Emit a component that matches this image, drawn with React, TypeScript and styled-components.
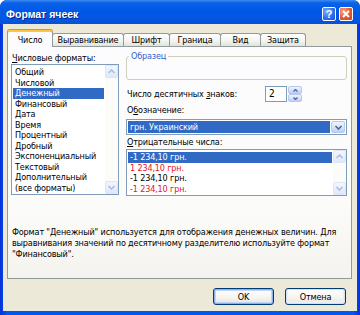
import React from 'react'
import styled, { createGlobalStyle } from 'styled-components'

const GlobalStyle = createGlobalStyle`
  html, body {
    margin: 0;
    padding: 0;
    background: #ffffff;
  }
  body {
    font-family: Tahoma, "DejaVu Sans Condensed", "DejaVu Sans", sans-serif;
    font-stretch: condensed;
    font-size: 9px;
    letter-spacing: -0.15px;
    color: #000000;
  }
`

const Window = styled.div`
  width: 360px;
  height: 315px;
  box-sizing: border-box;
  display: flex;
  flex-direction: column;
  background: linear-gradient(90deg, #0831d9 0%, #0058ee 2%, #0058ee 98%, #0831d9 100%);
  border-radius: 7px 7px 0 0;
  overflow: hidden;
`

const TitleBar = styled.div`
  height: 24px;
  box-sizing: border-box;
  padding: 3px 7px 0 6px;
  display: flex;
  align-items: center;
  background: linear-gradient(
    #3d8bf5 0%,
    #0a62e8 12%,
    #0058e6 45%,
    #0356e2 80%,
    #0650d8 100%
  );
`

const Title = styled.div`
  flex: 1;
  color: #ffffff;
  font-family: "Liberation Sans", Arial, sans-serif;
  font-stretch: normal;
  letter-spacing: 0;
  font-weight: bold;
  font-size: 10.5px;
  text-shadow: 1px 1px 0 #0a1e8c;
`

const TitleButtons = styled.div`
  display: flex;
  gap: 3px;
`

const TitleButton = styled.div<{ $close?: boolean }>`
  width: 14px;
  height: 14px;
  box-sizing: border-box;
  border: 1px solid #ffffff;
  border-radius: 2px;
  display: flex;
  align-items: center;
  justify-content: center;
  color: #ffffff;
  font-family: "Liberation Sans", Arial, sans-serif;
  font-weight: bold;
  font-size: 11px;
  background: ${p =>
    p.$close
      ? 'radial-gradient(circle at 30% 30%, #f2a78e 0%, #e35a2f 55%, #c8441d 100%)'
      : 'radial-gradient(circle at 30% 30%, #7fb0ff 0%, #2f6ff0 55%, #1d52d8 100%)'};
`

const Body = styled.div`
  flex: 1;
  margin: 0 3px 4px;
  background: #ece9d8;
  display: flex;
  flex-direction: column;
  padding: 6px 5px 0 4px;
`

const TabRow = styled.div`
  display: flex;
  align-items: flex-end;
  height: 16px;
`

const Tab = styled.div<{ $w: number; $active?: boolean }>`
  width: ${p => p.$w}px;
  height: ${p => (p.$active ? 17 : 13)}px;
  box-sizing: border-box;
  border: 1px solid #919b9c;
  border-bottom: none;
  border-radius: 3px 3px 0 0;
  text-align: center;
  white-space: nowrap;
  position: relative;
  z-index: ${p => (p.$active ? 1 : 0)};
  margin-bottom: ${p => (p.$active ? -1 : 0)}px;
  line-height: ${p => (p.$active ? 12 : 13)}px;
  padding-top: ${p => (p.$active ? 2 : 0)}px;
  background: ${p =>
    p.$active ? '#fcfcfe' : 'linear-gradient(#ffffff 0%, #f3f3ef 60%, #e3e2da 100%)'};
  border-top: ${p => (p.$active ? '2px solid #ffc83c' : '1px solid #919b9c')};
  box-shadow: ${p => (p.$active ? '0 -1px 0 #e68b2c' : 'none')};
  & + & {
    margin-left: -1px;
  }
`

const Panel = styled.div`
  height: 233px;
  box-sizing: border-box;
  border: 1px solid #919b9c;
  background: linear-gradient(#fcfcfe 0%, #fbfbf9 70%, #f4f3ee 100%);
  display: flex;
  flex-direction: column;
  padding: 3px 4px 0 3px;
`

const Columns = styled.div`
  display: grid;
  grid-template-columns: 108px 1fr;
  column-gap: 7px;
`

const Column = styled.div`
  display: flex;
  flex-direction: column;
  min-width: 0;
`

const Label = styled.div<{ $mt?: number }>`
  height: 12px;
  line-height: 12px;
  margin-top: ${p => p.$mt ?? 0}px;
  padding-left: 1px;
  white-space: nowrap;
`

const Key = styled.span`
  text-decoration: underline;
`

const ListBox = styled.div<{ $h: number; $mt: number }>`
  height: ${p => p.$h}px;
  margin-top: ${p => p.$mt}px;
  box-sizing: border-box;
  border: 1px solid #7f9db9;
  background: #ffffff;
  display: flex;
`

const Items = styled.div`
  flex: 1;
  padding: 2px 1px 0 1px;
  min-width: 0;
`

const Item = styled.div<{ $selected?: boolean; $red?: boolean }>`
  height: 10.5px;
  line-height: 10.5px;
  padding-left: 2px;
  white-space: nowrap;
  overflow: hidden;
  background: ${p => (p.$selected ? '#316ac5' : 'transparent')};
  color: ${p => (p.$selected ? '#ffffff' : p.$red ? '#e8141c' : '#000000')};
`

const ScrollBar = styled.div`
  width: 13px;
  display: flex;
  flex-direction: column;
  justify-content: space-between;
  background: #fbfbf8;
`

const ScrollButton = styled.div`
  height: 13px;
  box-sizing: border-box;
  border: 1px solid #dde6f8;
  border-radius: 2px;
  background: linear-gradient(#f2f6fe, #dfe8fb);
  display: flex;
  align-items: center;
  justify-content: center;
`

const Group = styled.fieldset`
  margin: 0;
  padding: 0;
  height: 30px;
  box-sizing: border-box;
  border: 1px solid #d0d0bf;
  border-radius: 3px;
  min-width: 0;
`

const Legend = styled.legend`
  color: #2f5fc8;
  padding: 0 2px;
  margin-left: 2px;
  line-height: 12px;
  font-size: 9px;
`

const SpinRow = styled.div`
  display: flex;
  align-items: center;
  height: 16px;
  margin-top: 6px;
`

const SpinLabel = styled.div`
  width: 138px;
  padding-left: 1px;
  white-space: nowrap;
`

const SpinInput = styled.div`
  width: 22px;
  height: 16px;
  box-sizing: border-box;
  border: 1px solid #7f9db9;
  background: #ffffff;
  padding-left: 3px;
  line-height: 14px;
  font-size: 10px;
`

const SpinButtons = styled.div`
  width: 14px;
  height: 16px;
  margin-left: 1px;
  display: flex;
  flex-direction: column;
`

const ArrowButton = styled.div<{ $h: number; $w?: number }>`
  height: ${p => p.$h}px;
  width: ${p => (p.$w ? `${p.$w}px` : 'auto')};
  box-sizing: border-box;
  border: 1px solid #b7c9f1;
  border-radius: 2px;
  background: linear-gradient(#eef3fe 0%, #d3e0fb 60%, #bccdf6 100%);
  display: flex;
  align-items: center;
  justify-content: center;
`

const Dropdown = styled.div`
  height: 16px;
  margin-top: 3px;
  box-sizing: border-box;
  border: 1px solid #7f9db9;
  background: #ffffff;
  padding: 1px;
  display: flex;
  gap: 1px;
`

const DropValue = styled.div`
  flex: 1;
  background: #316ac5;
  color: #ffffff;
  line-height: 12px;
  padding-left: 2px;
`

const Description = styled.div`
  margin-top: 31px;
  padding-left: 1px;
  line-height: 11px;
  white-space: nowrap;
`

const Footer = styled.div`
  display: flex;
  justify-content: flex-end;
  gap: 11px;
  margin-top: 9px;
  padding-right: 6px;
`

const Button = styled.div<{ $default?: boolean }>`
  width: 61px;
  height: 17px;
  box-sizing: border-box;
  border: 1px solid #003c74;
  border-radius: 3px;
  display: flex;
  align-items: center;
  justify-content: center;
  background: linear-gradient(#ffffff 0%, #f5f4ef 60%, #e3e2da 100%);
  box-shadow: ${p =>
    p.$default
      ? 'inset 0 0 0 1px #8fb0f0, inset 0 0 0 2px #c2d6fa'
      : 'inset 0 0 0 1px #d4e0f6, inset 0 -1px 0 2px #e9eef8'};
`

const Chevron = ({ up, color = '#a9bbe0' }: { up?: boolean; color?: string }) => (
  <svg width="7" height="5" viewBox="0 0 7 5">
    <polyline
      points={up ? '0.5,4 3.5,1 6.5,4' : '0.5,1 3.5,4 6.5,1'}
      fill="none"
      stroke={color}
      strokeWidth="1.5"
    />
  </svg>
)

const SmallChevron = ({ up }: { up?: boolean }) => (
  <svg width="5" height="3" viewBox="0 0 5 3">
    <polyline
      points={up ? '0.5,2.5 2.5,0.5 4.5,2.5' : '0.5,0.5 2.5,2.5 4.5,0.5'}
      fill="none"
      stroke="#4d6185"
      strokeWidth="1.2"
    />
  </svg>
)

const Scroll = () => (
  <ScrollBar>
    <ScrollButton>
      <Chevron up />
    </ScrollButton>
    <ScrollButton>
      <Chevron />
    </ScrollButton>
  </ScrollBar>
)

const formats = [
  'Общий',
  'Числовой',
  'Денежный',
  'Финансовый',
  'Дата',
  'Время',
  'Процентный',
  'Дробный',
  'Экспоненциальный',
  'Текстовый',
  'Дополнительный',
  '(все форматы)',
]

const negatives = [
  { text: '-1 234,10 грн.', red: false },
  { text: '1 234,10 грн.', red: true },
  { text: '-1 234,10 грн.', red: false },
  { text: '-1 234,10 грн.', red: true },
]

const tabs = [
  { name: 'Число', w: 46 },
  { name: 'Выравнивание', w: 72 },
  { name: 'Шрифт', w: 47 },
  { name: 'Граница', w: 52 },
  { name: 'Вид', w: 41 },
  { name: 'Защита', w: 46 },
]

export default function App() {
  return (
    <>
      <GlobalStyle />
      <Window>
        <TitleBar>
          <Title>Формат ячеек</Title>
          <TitleButtons>
            <TitleButton>?</TitleButton>
            <TitleButton $close>
              <svg width="8" height="8" viewBox="0 0 8 8">
                <path d="M1 1 L7 7 M7 1 L1 7" stroke="#ffffff" strokeWidth="1.8" />
              </svg>
            </TitleButton>
          </TitleButtons>
        </TitleBar>
        <Body>
          <TabRow>
            {tabs.map((t, i) => (
              <Tab key={t.name} $w={t.w} $active={i === 0}>
                {t.name}
              </Tab>
            ))}
          </TabRow>
          <Panel>
            <Columns>
              <Column>
                <Label $mt={2}>
                  <Key>Ч</Key>исловые форматы:
                </Label>
                <ListBox $h={131} $mt={0}>
                  <Items>
                    {formats.map(f => (
                      <Item key={f} $selected={f === 'Денежный'}>
                        {f}
                      </Item>
                    ))}
                  </Items>
                  <Scroll />
                </ListBox>
              </Column>
              <Column>
                <Group>
                  <Legend>Образец</Legend>
                </Group>
                <SpinRow>
                  <SpinLabel>
                    Число десятичных <Key>з</Key>наков:
                  </SpinLabel>
                  <SpinInput>2</SpinInput>
                  <SpinButtons>
                    <ArrowButton $h={8}>
                      <SmallChevron up />
                    </ArrowButton>
                    <ArrowButton $h={8}>
                      <SmallChevron />
                    </ArrowButton>
                  </SpinButtons>
                </SpinRow>
                <Label $mt={2}>
                  О<Key>б</Key>означение:
                </Label>
                <Dropdown>
                  <DropValue>грн. Украинский</DropValue>
                  <ArrowButton $h={12} $w={14}>
                    <Chevron color="#4d6185" />
                  </ArrowButton>
                </Dropdown>
                <Label $mt={1}>
                  <Key>О</Key>трицательные числа:
                </Label>
                <ListBox $h={47} $mt={1}>
                  <Items>
                    {negatives.map((n, i) => (
                      <Item key={i} $selected={i === 0} $red={n.red}>
                        {n.text}
                      </Item>
                    ))}
                  </Items>
                  <Scroll />
                </ListBox>
              </Column>
            </Columns>
            <Description>
              Формат "Денежный" используется для отображения денежных величин. Для
              <br />
              выравнивания значений по десятичному разделителю используйте формат
              <br />
              "Финансовый".
            </Description>
          </Panel>
          <Footer>
            <Button $default>OK</Button>
            <Button>Отмена</Button>
          </Footer>
        </Body>
      </Window>
    </>
  )
}
